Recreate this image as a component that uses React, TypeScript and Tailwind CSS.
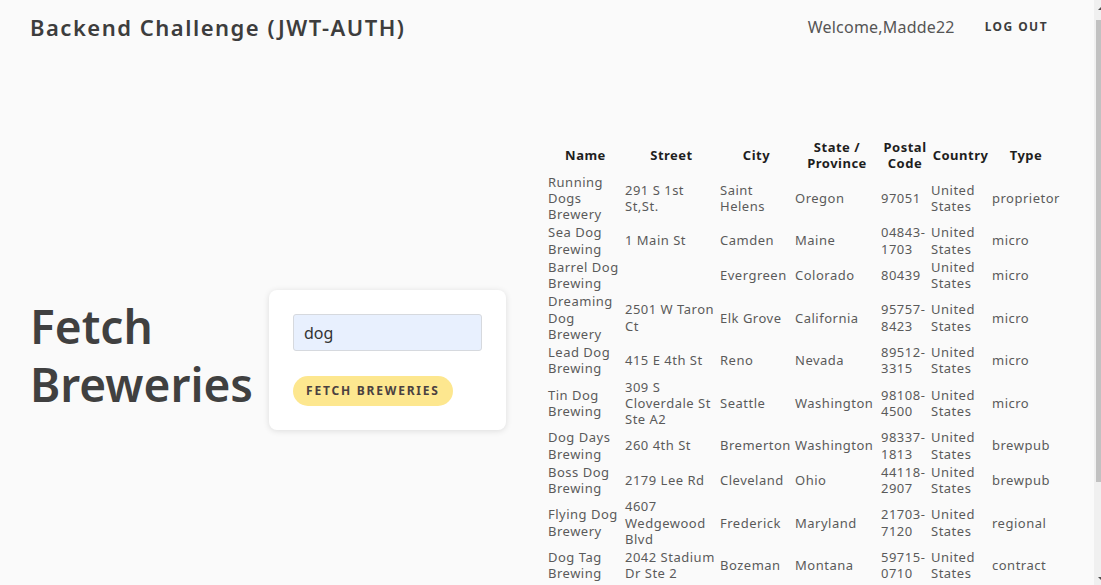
import React from "react";

type Brewery = {
  id: number;
  name: string;
  street: string;
  city: string;
  state: string;
  postal_code: string;
  country: string;
  brewery_type: string;
};

const breweries: Brewery[] = [
  { id: 1, name: "Running Dogs Brewery", street: "291 S 1st St,St.", city: "Saint Helens", state: "Oregon", postal_code: "97051", country: "United States", brewery_type: "proprietor" },
  { id: 2, name: "Sea Dog Brewing", street: "1 Main St", city: "Camden", state: "Maine", postal_code: "04843-1703", country: "United States", brewery_type: "micro" },
  { id: 3, name: "Barrel Dog Brewing", street: "", city: "Evergreen", state: "Colorado", postal_code: "80439", country: "United States", brewery_type: "micro" },
  { id: 4, name: "Dreaming Dog Brewery", street: "2501 W Taron Ct", city: "Elk Grove", state: "California", postal_code: "95757-8423", country: "United States", brewery_type: "micro" },
  { id: 5, name: "Lead Dog Brewing", street: "415 E 4th St", city: "Reno", state: "Nevada", postal_code: "89512-3315", country: "United States", brewery_type: "micro" },
  { id: 6, name: "Tin Dog Brewing", street: "309 S Cloverdale St Ste A2", city: "Seattle", state: "Washington", postal_code: "98108-4500", country: "United States", brewery_type: "micro" },
  { id: 7, name: "Dog Days Brewing", street: "260 4th St", city: "Bremerton", state: "Washington", postal_code: "98337-1813", country: "United States", brewery_type: "brewpub" },
  { id: 8, name: "Boss Dog Brewing", street: "2179 Lee Rd", city: "Cleveland", state: "Ohio", postal_code: "44118-2907", country: "United States", brewery_type: "brewpub" },
  { id: 9, name: "Flying Dog Brewery", street: "4607 Wedgewood Blvd", city: "Frederick", state: "Maryland", postal_code: "21703-7120", country: "United States", brewery_type: "regional" },
  { id: 10, name: "Dog Tag Brewing", street: "2042 Stadium Dr Ste 2", city: "Bozeman", state: "Montana", postal_code: "59715-0710", country: "United States", brewery_type: "contract" },
];

function Header() {
  return (
    <header className="flex h-[54px] items-center justify-between pl-[30px] pr-[30px]">
      <h1 className="text-[22px] font-semibold tracking-[1.5px] text-[#3d3d3d]">Backend Challenge (JWT-AUTH)</h1>
      <div className="flex items-center gap-[14px]">
        <span className="text-[16px] tracking-[0.2px] text-[#555]">Welcome,Madde22</span>
        <button className="px-4 py-1.5 text-[12px] font-bold uppercase tracking-[0.12em] text-[#3d3d3d]">Log out</button>
      </div>
    </header>
  );
}

function SearchCard() {
  return (
    <div className="w-[237px] rounded-lg bg-white p-6 shadow-[0_1px_6px_rgba(0,0,0,0.12)]">
      <input
        defaultValue="dog"
        className="h-[37px] w-[189px] rounded-[3px] border border-[#d6d9de] bg-[#e8f0fe] px-[10px] text-[16px] text-[#333] outline-none"
      />
      <button className="mt-[25px] h-[30px] rounded-full bg-[#fde78f] px-[13px] text-[12px] font-bold uppercase tracking-[0.15em] text-[#4a4040]">
        Fetch Breweries
      </button>
    </div>
  );
}

function BreweryTable({ rows }: { rows: Brewery[] }) {
  return (
    <table className="ml-[41px] w-[514px] table-fixed text-[13px] leading-[16.25px] tracking-[0.5px]">
      <colgroup>
        <col className="w-[77px]" />
        <col className="w-[95px]" />
        <col className="w-[75px]" />
        <col className="w-[86px]" />
        <col className="w-[50px]" />
        <col className="w-[61px]" />
        <col className="w-[70px]" />
      </colgroup>
      <thead>
        <tr className="font-bold text-[#1e1e1e]">
          <th className="p-px text-center">Name</th>
          <th className="p-px text-center">Street</th>
          <th className="p-px text-center">City</th>
          <th className="p-px text-center">State / Province</th>
          <th className="p-px text-center">Postal Code</th>
          <th className="p-px text-center">Country</th>
          <th className="p-px text-center">Type</th>
        </tr>
      </thead>
      <tbody className="text-[#5a5a5a]">
        {rows.map((b) => (
          <tr key={b.id}>
            <td className="p-px">{b.name}</td>
            <td className="p-px">{b.street}</td>
            <td className="p-px">{b.city}</td>
            <td className="p-px">{b.state}</td>
            <td className="p-px">{b.postal_code}</td>
            <td className="p-px">{b.country}</td>
            <td className="p-px">{b.brewery_type}</td>
          </tr>
        ))}
      </tbody>
    </table>
  );
}

// window scrollbar, cut at the right edge like in the screenshot
function Scrollbar() {
  return (
    <div className="flex h-screen w-[7px] shrink-0 flex-col bg-[#f0f0f0]">
      <div className="flex h-[20px] items-start justify-end pt-[7px]">
        <svg width="3" height="4" viewBox="0 0 3 4"><path d="M3 0 L0 3 L3 3 Z" fill="#505050" /></svg>
      </div>
      <div className="ml-[2px] h-[462px] bg-[#c1c1c1]" />
      <div className="flex flex-1 items-end justify-end pb-[5px]">
        <svg width="3" height="4" viewBox="0 0 3 4"><path d="M3 1 L0 1 L3 4 Z" fill="#505050" /></svg>
      </div>
    </div>
  );
}

export default function App() {
  return (
    <div className="flex h-screen bg-[#fafafa] [font-family:'Noto_Sans',sans-serif]">
      <div className="h-screen flex-1 overflow-y-auto [scrollbar-width:none]">
        <Header />
        <main className="flex items-center pb-[116px] pl-[30px] pt-[84px]">
          <h2 className="mb-[10px] w-[239px] text-[46px] font-semibold leading-[58px] text-[#404040]">
            Fetch Breweries
          </h2>
          <SearchCard />
          <BreweryTable rows={breweries} />
        </main>
      </div>
      <Scrollbar />
    </div>
  );
}
